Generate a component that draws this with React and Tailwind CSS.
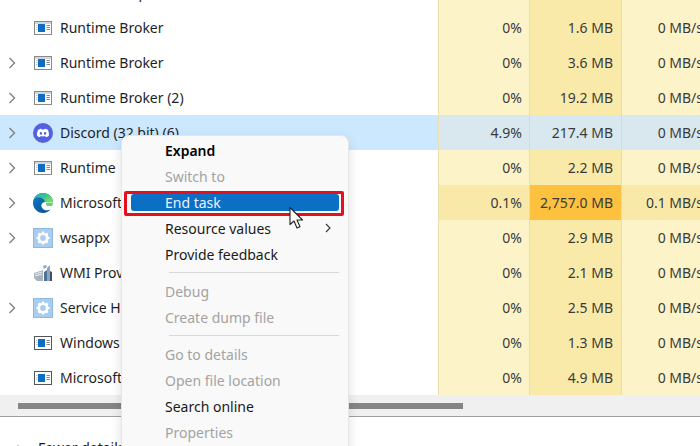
import React from 'react';

const font = { fontFamily: '"Noto Sans", "Open Sans", Arial, sans-serif' };

const WindowIcon = ({ dark }) => (
  <svg width="20" height="20" viewBox="0 0 20 20">
    <rect x="1.5" y="3.5" width="17" height="13" fill="#fff" stroke={dark ? '#555' : '#8a8a8a'} />
    <rect x="2" y="4" width="16" height="2" fill={dark ? '#fff' : '#cfd6de'} />
    <rect x="5" y="6" width="7" height="8" fill="#0f6cc4" />
    <path d="M13.5 7.5h3.5M13.5 9.5h3.5M13.5 11.5h3.5" stroke="#8a8a8a" strokeWidth="1" />
    <path d="M3 7.5h1.5M3 9.5h1.5M3 11.5h1.5" stroke="#b5c6d6" strokeWidth="1" />
  </svg>
);

const DiscordIcon = () => (
  <svg width="20" height="20" viewBox="0 0 20 20">
    <circle cx="10" cy="10" r="10" fill="#5462e0" />
    <path d="M5.2 6.8c1.2-.7 2.3-1 3-1.1l.4.7h2.8l.4-.7c.7.1 1.8.4 3 1.1.9 1.8 1.3 3.8 1.1 6-1 .8-2.1 1.2-3 1.4l-.7-1.1c-1.5.5-3 .5-4.5 0l-.7 1.1c-.9-.2-2-.6-3-1.4-.2-2.2.2-4.2 1.2-6z" fill="#fff" />
    <ellipse cx="7.9" cy="10.4" rx="1.15" ry="1.3" fill="#5462e0" />
    <ellipse cx="12.1" cy="10.4" rx="1.15" ry="1.3" fill="#5462e0" />
  </svg>
);

const EdgeIcon = () => (
  <svg width="20" height="20" viewBox="0 0 20 20">
    <defs>
      <linearGradient id="edgeTop" x1="0" y1="0" x2="1" y2="0.6">
        <stop offset="0" stopColor="#2aa5d6" />
        <stop offset="0.6" stopColor="#3bc58d" />
        <stop offset="1" stopColor="#7fdc62" />
      </linearGradient>
      <linearGradient id="edgeBody" x1="0" y1="0" x2="0.8" y2="1">
        <stop offset="0" stopColor="#0f7fc4" />
        <stop offset="1" stopColor="#0a4f9c" />
      </linearGradient>
    </defs>
    <path d="M10 0C4.5 0 0 4.5 0 10c0 5.5 4.5 10 10 10 3 0 5.6-1.2 7.4-3.4-2.2 1-5 1-6.8-.2C8.8 15.300 7.800 13 8.700 11c.8-1.600 2.800-2.300 4.800-1.900h6.500C20 4 15.500 0 10 0z" fill="url(#edgeBody)" />
    <path d="M10 0C5.500 0 2 2.800.6 6.500 2.500 4.700 5 4.200 7.500 4.800c3 .7 4.500 2.600 4.200 4.300h8.300C20 4 15.500 0 10 0z" fill="url(#edgeTop)" />
    <path d="M13 9.500h7c0 1.200-.3 2.400-1 3.500h-4.500c-1.300 0-1.800-2-1.500-3.500z" fill="#67d36c" />
  </svg>
);

const GearIcon = () => (
  <svg width="20" height="20" viewBox="0 0 20 20">
    <rect width="20" height="20" fill="#a9cdee" />
    <rect x="0.500" y="0.500" width="19" height="19" fill="none" stroke="#8fb8e0" />
    <circle cx="10" cy="10" r="4.200" fill="none" stroke="#fff" strokeWidth="2.600" />
    <path d="M10 3.500v2.500M10 14v2.500M3.500 10H6M14 10h2.500M5.400 5.400l1.800 1.800M12.800 12.800l1.800 1.800M14.600 5.400l-1.800 1.800M7.200 12.800l-1.800 1.800" stroke="#fff" strokeWidth="2.200" />
  </svg>
);

const WmiIcon = () => (
  <svg width="20" height="20" viewBox="0 0 20 20">
    <path d="M1 10l9-3v11H4l-3-3z" fill="#a8b2bd" />
    <path d="M2 11l7-2M2 13l7-2" stroke="#e8edf2" strokeWidth="1" />
    <path d="M11 18V9l3-2v11z" fill="#4f6f96" />
    <path d="M14 18V5l3-3v16z" fill="#8ea4bd" />
    <path d="M17 18V8l2 1v9z" fill="#3f4f63" />
    <path d="M10 3l3-1 1 2-3 2z" fill="#9aa5b0" />
  </svg>
);

const icons = {
  app: <WindowIcon />,
  appDark: <WindowIcon dark />,
  discord: <DiscordIcon />,
  edge: <EdgeIcon />,
  gear: <GearIcon />,
  wmi: <WmiIcon />,
};

const rows = [
  { name: 'Windows Explorer', cpu: '', mem: '', disk: '' },
  { name: 'Runtime Broker', icon: 'app', cpu: '0%', mem: '1.6 MB', disk: '0 MB/s' },
  { name: 'Runtime Broker', icon: 'app', cpu: '0%', mem: '3.6 MB', disk: '0 MB/s', chevron: true },
  { name: 'Runtime Broker (2)', icon: 'app', cpu: '0%', mem: '19.2 MB', disk: '0 MB/s', chevron: true },
  { name: 'Discord (32 bit) (6)', icon: 'discord', cpu: '4.9%', mem: '217.4 MB', disk: '0 MB/s', chevron: true, selected: true },
  { name: 'Runtime', icon: 'app', cpu: '0%', mem: '2.2 MB', disk: '0 MB/s', chevron: true },
  { name: 'Microsoft', icon: 'edge', cpu: '0.1%', mem: '2,757.0 MB', disk: '0.1 MB/s', chevron: true, hot: true },
  { name: 'wsappx', icon: 'gear', cpu: '0%', mem: '2.9 MB', disk: '0 MB/s', chevron: true },
  { name: 'WMI Prov', icon: 'wmi', cpu: '0%', mem: '2.1 MB', disk: '0 MB/s' },
  { name: 'Service H', icon: 'gear', cpu: '0%', mem: '2.5 MB', disk: '0 MB/s', chevron: true },
  { name: 'Windows', icon: 'appDark', cpu: '0%', mem: '1.3 MB', disk: '0 MB/s' },
  { name: 'Microsoft', icon: 'appDark', cpu: '0%', mem: '4.9 MB', disk: '0 MB/s' },
];

const menu = [
  { label: 'Expand', bold: true },
  { label: 'Switch to', off: true },
  { label: 'End task', active: true },
  { label: 'Resource values', more: true },
  { label: 'Provide feedback' },
  { sep: true },
  { label: 'Debug', off: true },
  { label: 'Create dump file', off: true },
  { sep: true },
  { label: 'Go to details', off: true },
  { label: 'Open file location', off: true },
  { label: 'Search online' },
  { label: 'Properties', off: true },
];

function Row({ row }) {
  const { selected, hot } = row;
  const cpuBg = selected ? 'bg-[#d9e8ee]' : hot ? 'bg-[#f9e9a9]' : 'bg-[#fdf3c8]';
  const memBg = selected ? 'bg-[#d9e8ee]' : hot ? 'bg-[#fcc13f]' : 'bg-[#f9eaa9]';
  return (
    <div className="flex h-[35px] text-[14px] text-[#3a3a3a]">
      <div className={`flex w-[438px] shrink-0 items-center ${selected ? 'bg-[#cce8ff]' : 'bg-white'}`}>
        <div className="flex w-[33px] shrink-0 justify-center pr-[9px]">
          {row.chevron && (
            <svg width="8" height="12" viewBox="0 0 8 12" fill="none" stroke="#7d7d7d" strokeWidth="1.300">
              <path d="M1.500 1l5 5-5 5" />
            </svg>
          )}
        </div>
        <div className="h-5 w-5 shrink-0">{icons[row.icon]}</div>
        <span className="ml-[7px] whitespace-nowrap text-[#1f1f1f]">{row.name}</span>
      </div>
      <div className={`flex w-[91px] shrink-0 items-center justify-end border-l border-[#eadfb0] pr-[7px] ${cpuBg}`}>
        {row.cpu}
      </div>
      <div className={`flex w-[92px] shrink-0 items-center justify-end border-l border-[#e9dca5] pr-[8px] ${memBg}`}>
        {row.mem}
      </div>
      <div className={`flex w-[90px] shrink-0 items-center justify-end border-l border-[#e9dca5] pr-[8px] ${cpuBg}`}>
        <span className="whitespace-nowrap">{row.disk}</span>
      </div>
    </div>
  );
}

function ContextMenu() {
  return (
    <div className="absolute left-[121px] top-[135px] h-[330px] w-[228px] rounded-lg border border-[#e6e6e6] bg-[#f9f9f9] pt-px text-[14px] shadow-[0_4px_12px_rgba(0,0,0,0.12)]">
      {menu.map((item, i) =>
        item.sep ? (
          <div key={i} className="flex h-[11px] pl-[47px] pr-[9px] pt-[5px]">
            <div className="h-px w-full bg-[#d8d8d8]" />
          </div>
        ) : (
          <div key={i} className="relative flex h-[26px] items-center pl-[43px] pr-[17px]">
            {item.active && <div className="absolute inset-x-[9px] top-[5px] h-[17px] rounded-[3px] bg-[#0c6fc6]" />}
            <span
              className={`relative flex-1 ${item.bold ? 'font-semibold text-black' : ''} ${
                item.off ? 'text-[#a3a3a3]' : item.active ? 'text-[#e8f3fc]' : item.bold ? '' : 'text-[#1a1a1a]'
              }`}
            >
              {item.label}
            </span>
            {item.more && (
              <svg width="6" height="10" viewBox="0 0 6 10" fill="none" stroke="#333" strokeWidth="1.100">
                <path d="M1 1l4 4-4 4" />
              </svg>
            )}
          </div>
        )
      )}
    </div>
  );
}

export default function App() {
  return (
    <div className="relative h-[446px] w-[700px] overflow-hidden bg-white" style={font}>
      <div className="-mt-[25px]">
        {rows.map((row, i) => (
          <Row key={i} row={row} />
        ))}
      </div>

      <div className="flex h-[22px] items-center border-b border-[#a0a0a0] bg-[#f0f0f0] pl-[18px]">
        <div className="h-[6px] w-[445px] bg-[#858585]" />
      </div>

      <div className="flex items-center gap-[15px] pl-[13px] pt-[20px] text-[14px] text-[#1a1a1a]">
        <svg width="10" height="6" viewBox="0 0 10 6" fill="none" stroke="#555" strokeWidth="1.200">
          <path d="M1 5l4-4 4 4" />
        </svg>
        <span>Fewer details</span>
      </div>

      <ContextMenu />

      {/* red annotation box around End task */}
      <div className="absolute left-[124px] top-[191px] h-[25px] w-[220px] rounded-[2px] border-[3px] border-[#e5101d]" />

      {/* mouse pointer */}
      <svg className="absolute left-[288px] top-[206px]" width="18" height="25" viewBox="0 0 18 25">
        <path d="M2 1.500v17l4-3.500 3 7 3-1.300-3-6.700h5.500z" fill="#fff" stroke="#222" strokeWidth="1.100" strokeLinejoin="round" />
      </svg>
    </div>
  );
}
